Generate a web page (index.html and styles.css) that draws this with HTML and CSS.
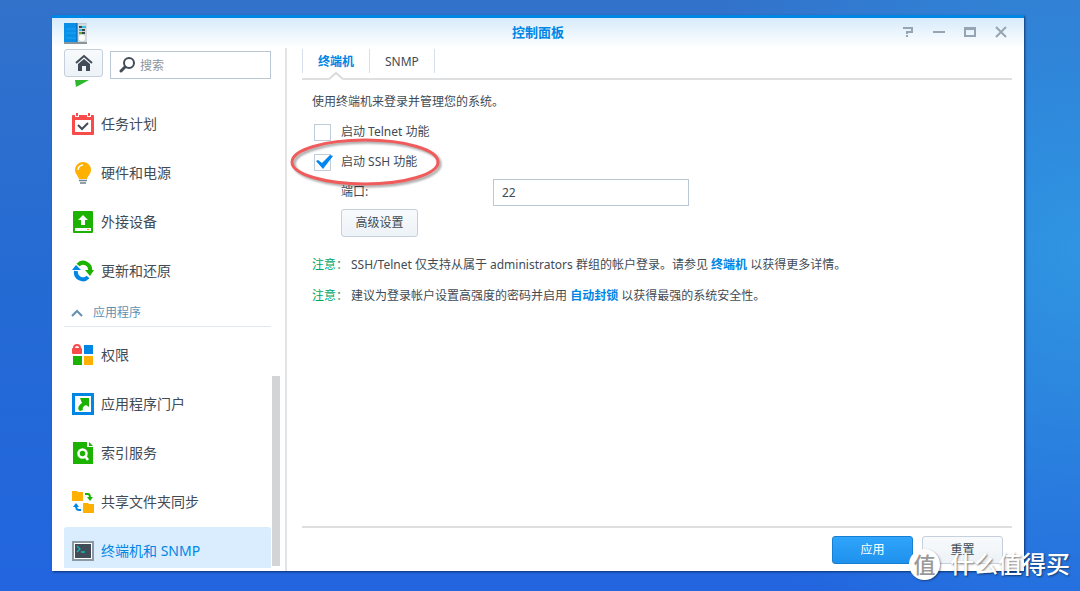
FILE: index.html
```
<!DOCTYPE html>
<html lang="zh-CN">
<head>
<meta charset="utf-8">
<meta name="viewport" content="width=device-width, initial-scale=1">
<title>控制面板</title>
<link rel="stylesheet" href="styles.css">
</head>
<body>
<section class="window">
  <header class="titlebar">
    <svg class="app-icon" viewBox="0 0 24 21" width="24" height="21" aria-hidden="true">
      <rect x="0" y="0" width="23" height="20" rx="1" fill="#c3cace"/>
      <path d="M0 20h23" stroke="#8a949b" stroke-width="2"/>
      <rect x="14" y="1" width="9" height="18" fill="#d3dadd"/>
      <rect x="0" y="0" width="13" height="19" fill="#0a8fe8"/>
      <path d="M2 6h10M2 10h10M2 15h10" stroke="#1ba6f2"/>
      <path d="M13 0v19" stroke="#0a5da0"/>
      <path d="M15 4h3M18 7h3" stroke="#3c4850" stroke-width="2"/>
      <path d="M18 4h4M15 7h3" stroke="#35c1e8" stroke-width="2"/>
      <path d="M15 10h3" stroke="#62b022" stroke-width="2"/><path d="M18 10h3" stroke="#3c4850" stroke-width="2"/>
      <circle cx="18" cy="15" r="3" fill="#fff"/>
    </svg>
    <h1 class="title">控制面板</h1>
    <div class="window-tools">
      <button type="button" aria-label="帮助"><svg viewBox="0 0 12 12" width="12" height="12"><path d="M1 2h9v4H5v2" fill="none" stroke="#96a5b3" stroke-width="2"/><path d="M4 9h2v2H4z" fill="#96a5b3"/></svg></button>
      <button type="button" aria-label="最小化"><svg viewBox="0 0 12 12" width="12" height="12"><path d="M0 6h12" stroke="#96a5b3" stroke-width="2"/></svg></button>
      <button type="button" aria-label="最大化"><svg viewBox="0 0 12 12" width="12" height="12"><path d="M1 2h10v8H1z" fill="none" stroke="#96a5b3" stroke-width="2"/><path d="M0 3h12" stroke="#96a5b3" stroke-width="2"/></svg></button>
      <button type="button" aria-label="关闭"><svg viewBox="0 0 12 12" width="12" height="12"><path d="M1 1l10 10M11 1L1 11" stroke="#96a5b3" stroke-width="2"/></svg></button>
    </div>
  </header>
  <div class="body">
    <aside class="sidebar">
      <div class="search-row">
        <button class="button home" type="button" aria-label="主页"><svg viewBox="0 0 18 18" width="18" height="18"><path d="M1 9l8-7 8 7" fill="none" stroke="#414c58" stroke-width="2"/><path d="M3 10l6-5 6 5v7h-4v-5H7v5H3z" fill="#414c58"/></svg></button>
        <label class="search">
          <svg viewBox="0 0 16 16" width="16" height="16" aria-hidden="true"><circle cx="10" cy="6" r="5" fill="none" stroke="#414c58" stroke-width="2"/><path d="M6 10l-4 4" stroke="#414c58" stroke-width="3" stroke-linecap="round"/></svg>
          <input type="search" placeholder="搜索" aria-label="搜索">
        </label>
      </div>
      <nav class="scroller">
        <a class="item item-partial" href="#region"><svg viewBox="0 0 22 22" width="22" height="22"><path d="M3 19h14L6 25l-2 1z" fill="#2eb82e"/></svg>区域选项</a>
        <a class="item" href="#tasks"><svg viewBox="0 0 22 22" width="22" height="22"><rect y="2" width="22" height="20" rx="1" fill="#fa4b4b"/><rect x="3" y="7" width="16" height="12" fill="#fff"/><path d="M5 0v4M17 0v4" stroke="#fff" stroke-width="4"/><path d="M5 0v3M17 0v3" stroke="#fa4b4b" stroke-width="2"/><path d="M6 12l4 4 6-6" fill="none" stroke="#414c58" stroke-width="2"/></svg>任务计划</a>
        <a class="item" href="#power"><svg viewBox="0 0 22 22" width="22" height="22"><path d="M11 0a8 8 0 0 0-8 8c0 4 3 5 4 9h8c1-4 4-5 4-9a8 8 0 0 0-8-8z" fill="#ffb000"/><path d="M6 8a5 5 0 0 1 5-5" fill="none" stroke="#fff" stroke-width="1.5"/><path d="M7 18.500h8M8 21h6" stroke="#71818d" stroke-width="1.300"/></svg>硬件和电源</a>
        <a class="item" href="#devices"><svg viewBox="0 0 22 22" width="22" height="22"><rect x="1" width="20" height="22" rx="1" fill="#1cb200"/><path d="M11 4l5 5h-3v5H9V9H6z" fill="#fff"/><rect x="3" y="17" width="16" height="3" fill="#fff"/><path d="M15 18.500h2" stroke="#ff8a1c"/></svg>外接设备</a>
        <a class="item" href="#update"><svg viewBox="0 0 22 22" width="22" height="22"><path d="M6 5a7 7 0 0 1 12 6" fill="none" stroke="#1cb200" stroke-width="4"/><path d="M13 10h9l-4 6z" fill="#1cb200"/><path d="M16 17A7 7 0 0 1 4 11" fill="none" stroke="#0086e5" stroke-width="4"/><path d="M0 10h9L4 5z" fill="#0086e5"/></svg>更新和还原</a>
        <button class="group" type="button" aria-expanded="true"><svg viewBox="0 0 12 8" width="12" height="8"><path d="M1 7l5-5 5 5" fill="none" stroke="#6390b0" stroke-width="2"/></svg>应用程序</button>
        <a class="item" href="#privileges"><svg viewBox="0 0 22 22" width="22" height="22"><path d="M2 5V4a3 3 0 0 1 6 0v1" fill="none" stroke="#fa4b4b" stroke-width="2"/><rect y="4" width="10" height="6" rx="1" fill="#fa4b4b"/><rect x="12" y="1" width="9" height="9" fill="#0086e5"/><rect x="1" y="12" width="9" height="9" fill="#1cb200"/><rect x="12" y="12" width="9" height="9" fill="#ffb000"/></svg>权限</a>
        <a class="item" href="#portal"><svg viewBox="0 0 22 22" width="22" height="22"><rect x="1.500" y="1.500" width="19" height="19" fill="#fff" stroke="#0086e5" stroke-width="3"/><path d="M8 5h9v9l-3-2c-3 1-4 3-3 5l-3 1c-3-2-2-5 2-8z" fill="#1cb200"/></svg>应用程序门户</a>
        <a class="item" href="#index"><svg viewBox="0 0 22 22" width="22" height="22"><path d="M1 0h14v5h6v17H1z" fill="#1cb200"/><path d="M17 0l4 4h-4z" fill="#1cb200"/><circle cx="10.500" cy="11.500" r="4" fill="none" stroke="#fff" stroke-width="2.500"/><path d="M13 14l3 4" stroke="#fff" stroke-width="2.500"/></svg>索引服务</a>
        <a class="item" href="#sync"><svg viewBox="0 0 22 22" width="22" height="22"><path d="M0 0h5l1 1h5v9H0zM11 12h5l1 1h5v9H11z" fill="#ffb000"/><path d="M13 3h3q2 0 2 4" fill="none" stroke="#1cb200" stroke-width="2"/><path d="M15 6h6l-3 4z" fill="#1cb200"/><path d="M9 19H7q-3 0-3-4" fill="none" stroke="#0086e5" stroke-width="2"/><path d="M1 16h6l-3-4z" fill="#0086e5"/></svg>共享文件夹同步</a>
        <a class="item item-active" href="#terminal"><svg viewBox="0 0 22 22" width="22" height="22"><rect x="1" y="2" width="20" height="18" fill="#414c58" stroke="#8c99a3" stroke-width="2"/><rect x="2.500" y="3.500" width="17" height="15" fill="none" stroke="#fff"/><path d="M5 6l3 3-3 3M9 12h4" fill="none" stroke="#13b8b8" stroke-width="1.300"/></svg>终端机和 SNMP</a>
        <span class="scrollbar"></span>
      </nav>
    </aside>
    <main class="main">
      <nav class="tabs">
        <a class="tab tab-active" href="#terminal">终端机<svg class="notch" viewBox="0 0 14 8" width="14" height="8"><path d="M0 8l7-7 7 7z" fill="#fff"/><path d="M0 7l7-6 7 6" fill="none" stroke="#d9dadb" stroke-width="2"/></svg></a>
        <a class="tab" href="#snmp">SNMP</a>
      </nav>
      <form class="form">
        <p class="line">使用终端机来登录并管理您的系统。</p>
        <div class="line check"><input type="checkbox" id="telnet"><label for="telnet">启动 Telnet 功能</label></div>
        <div class="line check">
          <input type="checkbox" id="ssh" checked><label for="ssh">启动 SSH 功能</label>
          <svg class="tick" viewBox="0 0 18 14" width="18" height="14"><path d="M1 6l2-1 4 3 8-8 3 1L8 14z" fill="#0086f0"/></svg>
          <svg class="highlight" viewBox="0 0 156 54" width="156" height="54"><ellipse cx="75" cy="25" rx="73" ry="22" fill="none" stroke="#f05c5c" stroke-width="3"/></svg>
        </div>
        <div class="line port"><label for="port">端口:</label><input type="text" id="port" value="22"></div>
        <div class="line advanced"><button class="button" type="button">高级设置</button></div>
        <p class="note"><span class="note-label">注意：</span><span>SSH/Telnet 仅支持从属于 administrators 群组的帐户登录。请参见 <a href="#terminal">终端机</a> 以获得更多详情。</span></p>
        <p class="note"><span class="note-label">注意：</span><span>建议为登录帐户设置高强度的密码并启用 <a href="#autoblock">自动封锁</a> 以获得最强的系统安全性。</span></p>
      </form>
      <footer class="actions">
        <button class="button primary" type="button">应用</button>
        <button class="button" type="button">重置</button>
      </footer>
    </main>
  </div>
</section>
<div class="watermark"><span class="watermark-badge">值</span><span>什么值得买</span></div>
</body>
</html>
```
FILE: styles.css
```
* { box-sizing: border-box; }

body {
  margin: 0;
  height: 100vh;
  padding: 15px 56px 20px 52px;
  overflow: hidden;
  position: relative;
  display: flex;
  background:
    radial-gradient(ellipse 40% 75% at 100% 42%, #3095e2, rgba(48, 149, 226, 0) 100%),
    linear-gradient(#3272cb, #256bd3 45%, #2265df);
  color: #414b55;
  font: 12px/18px "Noto Sans", "Noto Sans CJK SC", sans-serif;
}

a { color: #0086e5; text-decoration: none; }
button, input { font: inherit; color: inherit; }
p { margin: 0; }
svg { flex: none; }

.window {
  flex: 1;
  min-width: 0;
  display: flex;
  flex-direction: column;
  border-top: 3px solid #0086e5;
  background: linear-gradient(#d7ebfb, #fff 30px);
  box-shadow: 1px 1px 2px rgba(0, 25, 70, 0.7);
}

.titlebar {
  height: 30px;
  padding: 0 17px 2px 12px;
  display: grid;
  grid-template-columns: 1fr auto 1fr;
  align-items: center;
}
.app-icon { margin-top: 2px; }
.title { margin: 0; padding-left: 5px; font-size: 13px; line-height: 20px; font-weight: 700; color: #0086e5; }
.window-tools { display: flex; justify-content: flex-end; gap: 19px; }
.window-tools button { display: flex; padding: 0; border: 0; background: none; }

.body { flex: 1; min-height: 0; display: flex; }

.sidebar {
  width: 235px;
  flex: none;
  display: flex;
  flex-direction: column;
  padding: 1px 5px 3px 12px;
  border-right: 2px solid #e2e3e4;
}
.search-row { display: flex; gap: 7px; padding-right: 9px; height: 31px; }
.button {
  height: 28px;
  min-width: 77px;
  padding: 0 8px;
  border: 1px solid #c5d0dc;
  border-radius: 3px;
  background: linear-gradient(#f8fafc, #edf2f7);
}
.home { min-width: 39px; padding: 0; display: flex; align-items: center; justify-content: center; }
.search {
  flex: 1;
  min-width: 0;
  height: 28px;
  margin-top: 2px;
  padding: 0 8px;
  display: flex;
  align-items: center;
  gap: 5px;
  border: 1px solid #bac7d5;
  background: #fff;
}
.search input { width: 100%; min-width: 0; padding: 1px 0 0; border: 0; outline: 0; background: none; }
.search input::placeholder { color: #8d959d; }

.scroller { flex: 1; min-height: 0; overflow: hidden; position: relative; padding-right: 9px; }
.item {
  height: 49px;
  padding: 0 0 1px 8px;
  display: flex;
  align-items: center;
  gap: 7px;
  border-radius: 3px;
  color: #414b55;
  font-size: 14px;
}
.item-partial { margin-top: -29px; padding-bottom: 8px; }
.item-partial svg { overflow: visible; }
.item-active { background: #d9edff; color: #0086e5; }
.group {
  width: 100%;
  height: 31px;
  margin-bottom: 4px;
  padding: 4px 0 0 7px;
  display: flex;
  align-items: center;
  gap: 10px;
  border: 0;
  border-bottom: 1px solid #dfe9f1;
  background: none;
  color: #6390b0;
}
.scrollbar { position: absolute; right: 0; bottom: 2px; width: 8px; height: 39%; background: #d3d4d5; }

.main { flex: 1; min-width: 0; display: flex; flex-direction: column; padding: 1px 12px 7px 15px; }
.tabs { display: flex; height: 31px; border-bottom: 2px solid #dedfe0; }
.tab {
  position: relative;
  height: 24px;
  padding: 1px 15px 0;
  line-height: 24px;
  border-right: 1px solid #d5e0ec;
  color: #414b55;
}
.tab-active { color: #0086e5; font-weight: 700; border-left: 1px solid #d5e0ec; }
.notch { position: absolute; left: 50%; margin-left: -7px; top: 23px; }

.form { flex: 1; padding: 7px 10px; }
.line { min-height: 30px; display: flex; align-items: center; }
.check { position: relative; padding-left: 2px; gap: 10px; }
.check input {
  appearance: none;
  width: 17px;
  height: 17px;
  margin: 0;
  border: 1px solid #bfccd9;
  background: #fff;
}
.tick { position: absolute; left: 3px; top: 8px; pointer-events: none; }
.highlight { position: absolute; left: -22px; top: -10px; z-index: 1; pointer-events: none; filter: drop-shadow(2px 2px 1px rgba(0, 0, 0, 0.35)); }
.port { padding-left: 29px; }
.port label { width: 152px; }
.port input { width: 196px; height: 27px; padding: 0 8px; border: 1px solid #bac7d5; background: #fff; outline: 0; }
.advanced { padding-left: 29px; min-height: 32px; }
.note { display: flex; gap: 3px; padding-top: 13px; }
.advanced + .note { padding-top: 17px; }
.note-label { flex: none; color: #00a560; }
.note a { font-weight: 700; }

.actions { display: flex; justify-content: flex-end; gap: 9px; padding: 8px 9px 0 0; border-top: 2px solid #dedfe0; }
.actions .button { width: 81px; }
.actions .primary { border-color: #1580d3; background: linear-gradient(#30a5fb, #1e91ed); color: #fff; }

.watermark {
  position: absolute;
  right: 10px;
  bottom: 11px;
  z-index: 2;
  display: flex;
  align-items: center;
  gap: 10px;
  color: #fff;
  font-size: 24px;
  font-weight: 500;
  line-height: 32px;
  text-shadow: 1px 1px 2px rgba(0, 0, 0, 0.5);
}
.watermark-badge {
  width: 31px;
  height: 31px;
  border-radius: 50%;
  background: #fff;
  color: #999;
  font-size: 22px;
  line-height: 30px;
  text-align: center;
  text-shadow: none;
  box-shadow: 1px 1px 2px rgba(0, 0, 0, 0.4);
}
```
